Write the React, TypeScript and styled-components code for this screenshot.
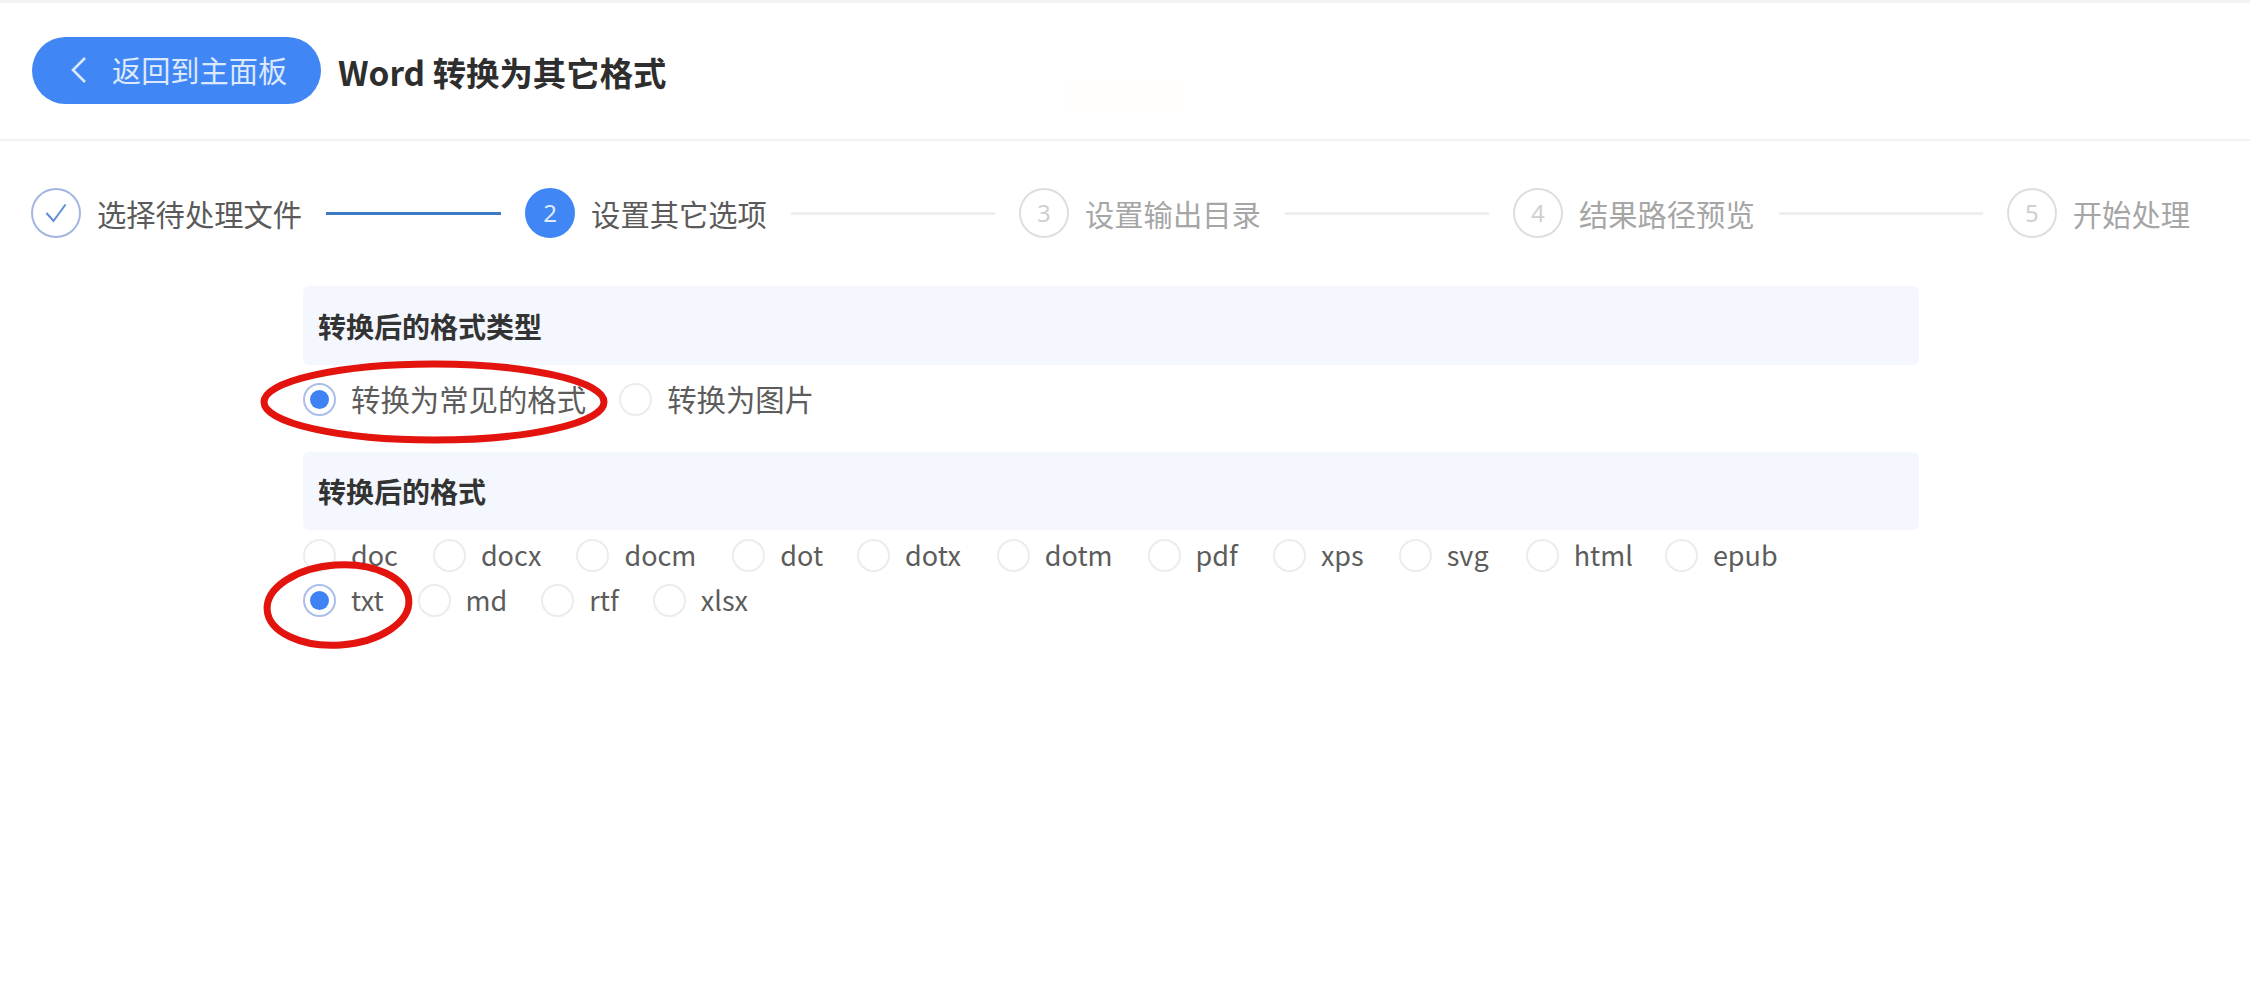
import React from "react";
import styled, { createGlobalStyle } from "styled-components";

const Global = createGlobalStyle`
  html, body { margin: 0; padding: 0; background: #fff; }
  body { font-family: "Noto Sans CJK SC", "Noto Sans", sans-serif; }
  * { box-sizing: border-box; }
`;

const Page = styled.div`
  position: relative;
  width: 2250px;
  height: 1004px;
  overflow: hidden;
  background: #fff;
  border-top: 3px solid #f2f2f3;
`;

const Header = styled.header`
  display: flex;
  align-items: center;
  gap: 17px;
  height: 138px;
  padding: 0 32px 2px;
  border-bottom: 2px solid #f1f1f2;
`;

const BackButton = styled.button`
  display: flex;
  align-items: center;
  gap: 24px;
  width: 289px;
  height: 67px;
  padding: 0 0 0 38px;
  border: none;
  border-radius: 34px;
  background: #4186f5;
  color: #dce9fd;
  font: 400 29.2px/1 "Noto Sans CJK SC", sans-serif;
  white-space: nowrap;
`;

const Title = styled.h1`
  margin: 4px 0 0;
  color: #2e2e2e;
  font: 700 33.4px/1 "Noto Sans CJK SC", sans-serif;
  white-space: nowrap;
`;

const Watermark = styled.div`
  position: absolute;
  left: 1069px;
  top: 77px;
  width: 116px;
  height: 33px;
  background: #fffefa;
`;

const Stepper = styled.nav`
  display: flex;
  align-items: center;
  height: 144px;
  margin-bottom: 1px;
  padding: 0 60px 0 31px;
`;

const Step = styled.div`
  display: flex;
  align-items: center;
  gap: 16px;
  flex: none;
`;

const StepCircle = styled.span<{ $state: "done" | "active" | "todo" }>`
  display: flex;
  align-items: center;
  justify-content: center;
  width: 50px;
  height: 50px;
  border-radius: 50%;
  font: 400 24px/1 "Noto Sans", sans-serif;
  border: 2px solid
    ${(p) => (p.$state === "done" ? "#a3b6e2" : p.$state === "active" ? "#4186f5" : "#dedede")};
  background: ${(p) => (p.$state === "active" ? "#4186f5" : "#fff")};
  color: ${(p) => (p.$state === "active" ? "#dfeafd" : p.$state === "done" ? "#4186f5" : "#cfcfcf")};
`;

const StepLabel = styled.span<{ $muted?: boolean }>`
  color: ${(p) => (p.$muted ? "#a6a6a6" : "#5a5a5a")};
  font-size: 29.3px;
  line-height: 40px;
  white-space: nowrap;
`;

const Connector = styled.span<{ $done?: boolean; $width?: number }>`
  flex: ${(p) => (p.$width ? `0 0 ${p.$width}px` : "1 1 0")};
  height: 3px;
  margin: 0 24px;
  background: ${(p) => (p.$done ? "#3f78c4" : "#eeeeee")};
`;

const Form = styled.main`
  display: flex;
  flex-direction: column;
  width: 1616px;
  margin-left: 303px;
`;

const SectionTitle = styled.h2<{ $height: number }>`
  display: flex;
  align-items: center;
  height: ${(p) => p.$height}px;
  margin: 0;
  padding-left: 15px;
  background: #f4f7fe;
  border-radius: 6px;
  color: #333;
  font: 700 28px/1 "Noto Sans CJK SC", sans-serif;
`;

const OptionRow = styled.div<{ $top: number; $bottom: number }>`
  display: flex;
  align-items: center;
  height: 33px;
  margin: ${(p) => p.$top}px 0 ${(p) => p.$bottom}px;
`;

const Option = styled.label<{ $gapAfter: number }>`
  display: flex;
  align-items: center;
  gap: 15px;
  margin-right: ${(p) => p.$gapAfter}px;
`;

const Radio = styled.span<{ $checked?: boolean }>`
  display: flex;
  align-items: center;
  justify-content: center;
  flex: none;
  width: 33px;
  height: 33px;
  border-radius: 50%;
  border: 2px solid ${(p) => (p.$checked ? "#a9bfe9" : "#ececec")};
  background: #fff;
  &::after {
    content: "";
    display: ${(p) => (p.$checked ? "block" : "none")};
    width: 19px;
    height: 19px;
    border-radius: 50%;
    background: #3f82f3;
  }
`;

const OptionText = styled.span<{ $latin?: boolean }>`
  color: #5c5c5c;
  font-size: ${(p) => (p.$latin ? "27px" : "29.4px")};
  line-height: 33px;
  padding-bottom: ${(p) => (p.$latin ? "3px" : "2px")};
  white-space: nowrap;
`;

const Annotation = styled.svg`
  position: absolute;
  left: 0;
  top: 0;
  width: 2250px;
  height: 1004px;
  pointer-events: none;
`;

const Chevron = () => (
  <svg width="18" height="28" viewBox="0 0 18 28" fill="none" stroke="#dce9fd" strokeWidth="2.6">
    <path d="M15 2 3 14l12 12" />
  </svg>
);

const Check = () => (
  <svg width="22" height="20" viewBox="0 0 22 20" fill="none" stroke="#5f8bd8" strokeWidth="2">
    <path d="M1.5 10l7 8L20.5 1.5" />
  </svg>
);

const typeOptions: [string, boolean, number][] = [
  ["转换为常见的格式", true, 33],
  ["转换为图片", false, 0],
];

const row1: [string, number][] = [
  ["doc", 35],
  ["docx", 35],
  ["docm", 36],
  ["dot", 34],
  ["dotx", 36],
  ["dotm", 35],
  ["pdf", 35],
  ["xps", 35],
  ["svg", 37],
  ["html", 32],
  ["epub", 0],
];

const row2: [string, boolean, number][] = [
  ["txt", true, 34],
  ["md", false, 34],
  ["rtf", false, 34],
  ["xlsx", false, 0],
];

export default function App() {
  return (
    <Page>
      <Global />
      <Header>
        <BackButton>
          <Chevron />
          返回到主面板
        </BackButton>
        <Title>Word 转换为其它格式</Title>
      </Header>
      <Watermark />
      <Stepper>
        <Step>
          <StepCircle $state="done">
            <Check />
          </StepCircle>
          <StepLabel>选择待处理文件</StepLabel>
        </Step>
        <Connector $done $width={175} />
        <Step>
          <StepCircle $state="active">2</StepCircle>
          <StepLabel>设置其它选项</StepLabel>
        </Step>
        <Connector />
        <Step>
          <StepCircle $state="todo">3</StepCircle>
          <StepLabel $muted>设置输出目录</StepLabel>
        </Step>
        <Connector />
        <Step>
          <StepCircle $state="todo">4</StepCircle>
          <StepLabel $muted>结果路径预览</StepLabel>
        </Step>
        <Connector />
        <Step>
          <StepCircle $state="todo">5</StepCircle>
          <StepLabel $muted>开始处理</StepLabel>
        </Step>
      </Stepper>
      <Form>
        <SectionTitle $height={79}>转换后的格式类型</SectionTitle>
        <OptionRow $top={18} $bottom={36}>
          {typeOptions.map(([t, c, g]) => (
            <Option key={t} $gapAfter={g}>
              <Radio $checked={c} />
              <OptionText>{t}</OptionText>
            </Option>
          ))}
        </OptionRow>
        <SectionTitle $height={78}>转换后的格式</SectionTitle>
        <OptionRow $top={9} $bottom={12}>
          {row1.map(([t, g]) => (
            <Option key={t} $gapAfter={g}>
              <Radio />
              <OptionText $latin>{t}</OptionText>
            </Option>
          ))}
        </OptionRow>
        <OptionRow $top={0} $bottom={0}>
          {row2.map(([t, c, g]) => (
            <Option key={t} $gapAfter={g}>
              <Radio $checked={c} />
              <OptionText $latin>{t}</OptionText>
            </Option>
          ))}
        </OptionRow>
      </Form>
      <Annotation viewBox="0 0 2250 1004" fill="none" stroke="#e2140d" strokeWidth="7">
        <ellipse cx="434" cy="399" rx="170" ry="38" />
        <ellipse cx="338" cy="602" rx="71" ry="40" transform="rotate(-4 338 602)" />
      </Annotation>
    </Page>
  );
}
